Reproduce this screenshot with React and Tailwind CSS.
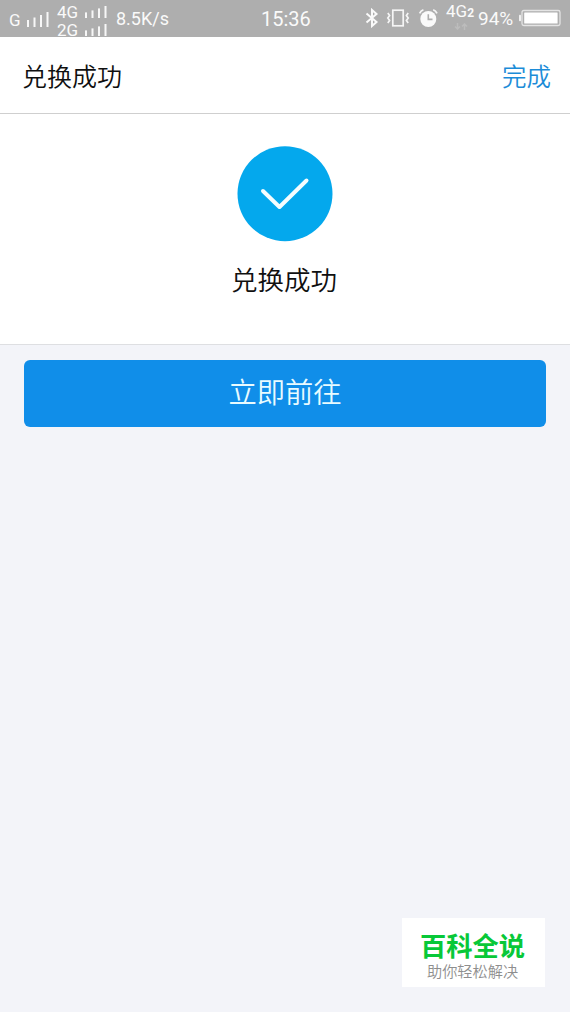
function SignalBars({ className }) {
  return (
    <svg viewBox="0 0 22 15" preserveAspectRatio="none" fill="#f7f7f7" className={className}>
      <rect x="0" y="8" width="2" height="7" />
      <rect x="6.5" y="5.5" width="2" height="9.5" />
      <rect x="13" y="3" width="2" height="12" />
      <rect x="19.5" y="0" width="2" height="15" />
    </svg>
  );
}

function BluetoothIcon() {
  return (
    <svg viewBox="0 0 14 20" fill="none" stroke="#fafafa" strokeWidth="2" className="w-3.5 h-5">
      <path d="M1.5 5.5 L11.5 14 L7 18 V2 L11.5 6 L1.5 14.5" />
    </svg>
  );
}

function VibrateIcon() {
  return (
    <svg viewBox="0 0 24 18" fill="none" stroke="#f5f5f5" strokeWidth="1.7" className="w-6 h-[18px]">
      <rect x="6.8" y="1.2" width="10.4" height="15.6" />
      <path d="M1.8 4 L3.6 6.5 L1.8 9 L3.6 11.5 L1.8 14" />
      <path d="M22.2 4 L20.4 6.5 L22.2 9 L20.4 11.5 L22.2 14" />
    </svg>
  );
}

function AlarmIcon() {
  return (
    <svg viewBox="0 0 20 20" fill="none" className="w-5 h-5">
      <circle cx="10.3" cy="11" r="8" fill="#fafafa" />
      <path d="M10.3 6.2 V11.4 H14.5" stroke="#aeaeae" strokeWidth="1.6" />
      <path d="M1.6 5.4 Q2.8 2.8 5.4 1.8 M19 5.4 Q17.8 2.8 15.2 1.8" stroke="#f5f5f5" strokeWidth="1.7" />
    </svg>
  );
}

function BatteryIcon() {
  return (
    <svg viewBox="0 0 43 18" fill="none" className="w-[43px] h-[18px]">
      <rect x="1" y="5.8" width="2" height="6.4" rx="0.8" fill="#f0f0f0" />
      <rect x="4" y="1.5" width="38" height="15" rx="1.8" stroke="#e4e4e4" strokeWidth="1.3" />
      <rect x="6.2" y="3.4" width="33.4" height="11.2" rx="0.5" fill="#ffffff" />
    </svg>
  );
}

function StatusBar() {
  return (
    <div className="flex h-[37px] bg-[#aeaeae] text-[#fafafa] font-['Roboto',sans-serif] whitespace-nowrap">
      <span className="w-[18px] ml-[9px] mt-2.5 text-[17px] leading-5">G</span>
      <SignalBars className="w-[22px] h-[15px] mt-3" />
      <div className="w-[59px] ml-2 mt-[3px] text-[17px] leading-[18px]">
        <div className="flex">
          <span className="w-7">4G</span>
          <SignalBars className="w-[22px] h-3 mt-[3px]" />
        </div>
        <div className="flex">
          <span className="w-7">2G</span>
          <SignalBars className="w-[22px] h-3 mt-[3px]" />
        </div>
      </div>
      <span className="w-[145px] mt-[9px] text-[18px] leading-5">8.5K/s</span>
      <span className="w-[104px] mt-[7px] text-[20px] leading-6">15:36</span>
      <div className="mt-2">
        <BluetoothIcon />
      </div>
      <div className="ml-[7px] mt-[9px]">
        <VibrateIcon />
      </div>
      <div className="ml-2 mt-2">
        <AlarmIcon />
      </div>
      <div className="w-8 ml-2">
        <div className="flex items-baseline mt-[1px] text-[17px] leading-5">
          4G<span className="text-[12px] font-bold">2</span>
        </div>
        <svg viewBox="0 0 14 7" fill="none" stroke="#bcbcbc" strokeWidth="1.5" className="w-3.5 h-[7px] ml-2">
          <path d="M3.5 0 V6 M1 3.5 L3.5 6 L6 3.5 M10.5 7 V1 M8 3.5 L10.5 1 L13 3.5" />
        </svg>
      </div>
      <span className="w-10 mt-[9px] text-[19px] leading-5">94%</span>
      <div className="mt-[9px]">
        <BatteryIcon />
      </div>
    </div>
  );
}

function SuccessIcon() {
  return (
    <svg viewBox="0 0 96 96" fill="none" className="w-24 h-24">
      <circle cx="48" cy="47.7" r="47.5" fill="#04a8ed" />
      <path d="M26 45 L42.5 61 L69.5 34.5" stroke="#f5fdff" strokeWidth="4" strokeLinecap="round" strokeLinejoin="round" />
    </svg>
  );
}

export default function App() {
  return (
    <div className="flex flex-col w-[570px] h-[1012px] bg-[#f3f4f9] font-['Noto_Sans_CJK_SC',sans-serif] overflow-hidden">
      <StatusBar />

      {/* Title bar */}
      <header className="flex items-center justify-between h-[77px] pl-[22px] pr-[19px] pt-[2px] bg-white border-b border-[#cfcfcf]">
        <h1 className="text-[25px] font-[350] text-[#101010]">兑换成功</h1>
        <button className="pt-px text-[24.5px] font-[350] text-[#1c8cd8]">完成</button>
      </header>

      {/* Result */}
      <section className="flex flex-col items-center h-[231px] pt-8 bg-white border-b border-[#dedfe2]">
        <SuccessIcon />
        <p className="mt-[17px] mr-0.5 text-[26.5px] leading-10 font-[350] text-[#101010]">兑换成功</p>
      </section>

      <button className="flex items-center justify-center h-[67px] mx-6 mt-[15px] pb-1 rounded-md bg-[#108ee9] text-[28.3px] font-[350] text-[#e8fbff]">
        立即前往
      </button>

      {/* Site badge */}
      <footer className="flex flex-col items-center w-[143px] h-[69px] mt-auto mb-[25px] ml-auto mr-[25px] pt-[11px] pr-0.5 bg-white">
        <strong className="text-[26.3px] leading-8 font-bold text-[#08c838]">百科全说</strong>
        <span className="text-[15.2px] leading-[18px] font-[350] text-[#8e8e8e]">助你轻松解决</span>
      </footer>
    </div>
  );
}
